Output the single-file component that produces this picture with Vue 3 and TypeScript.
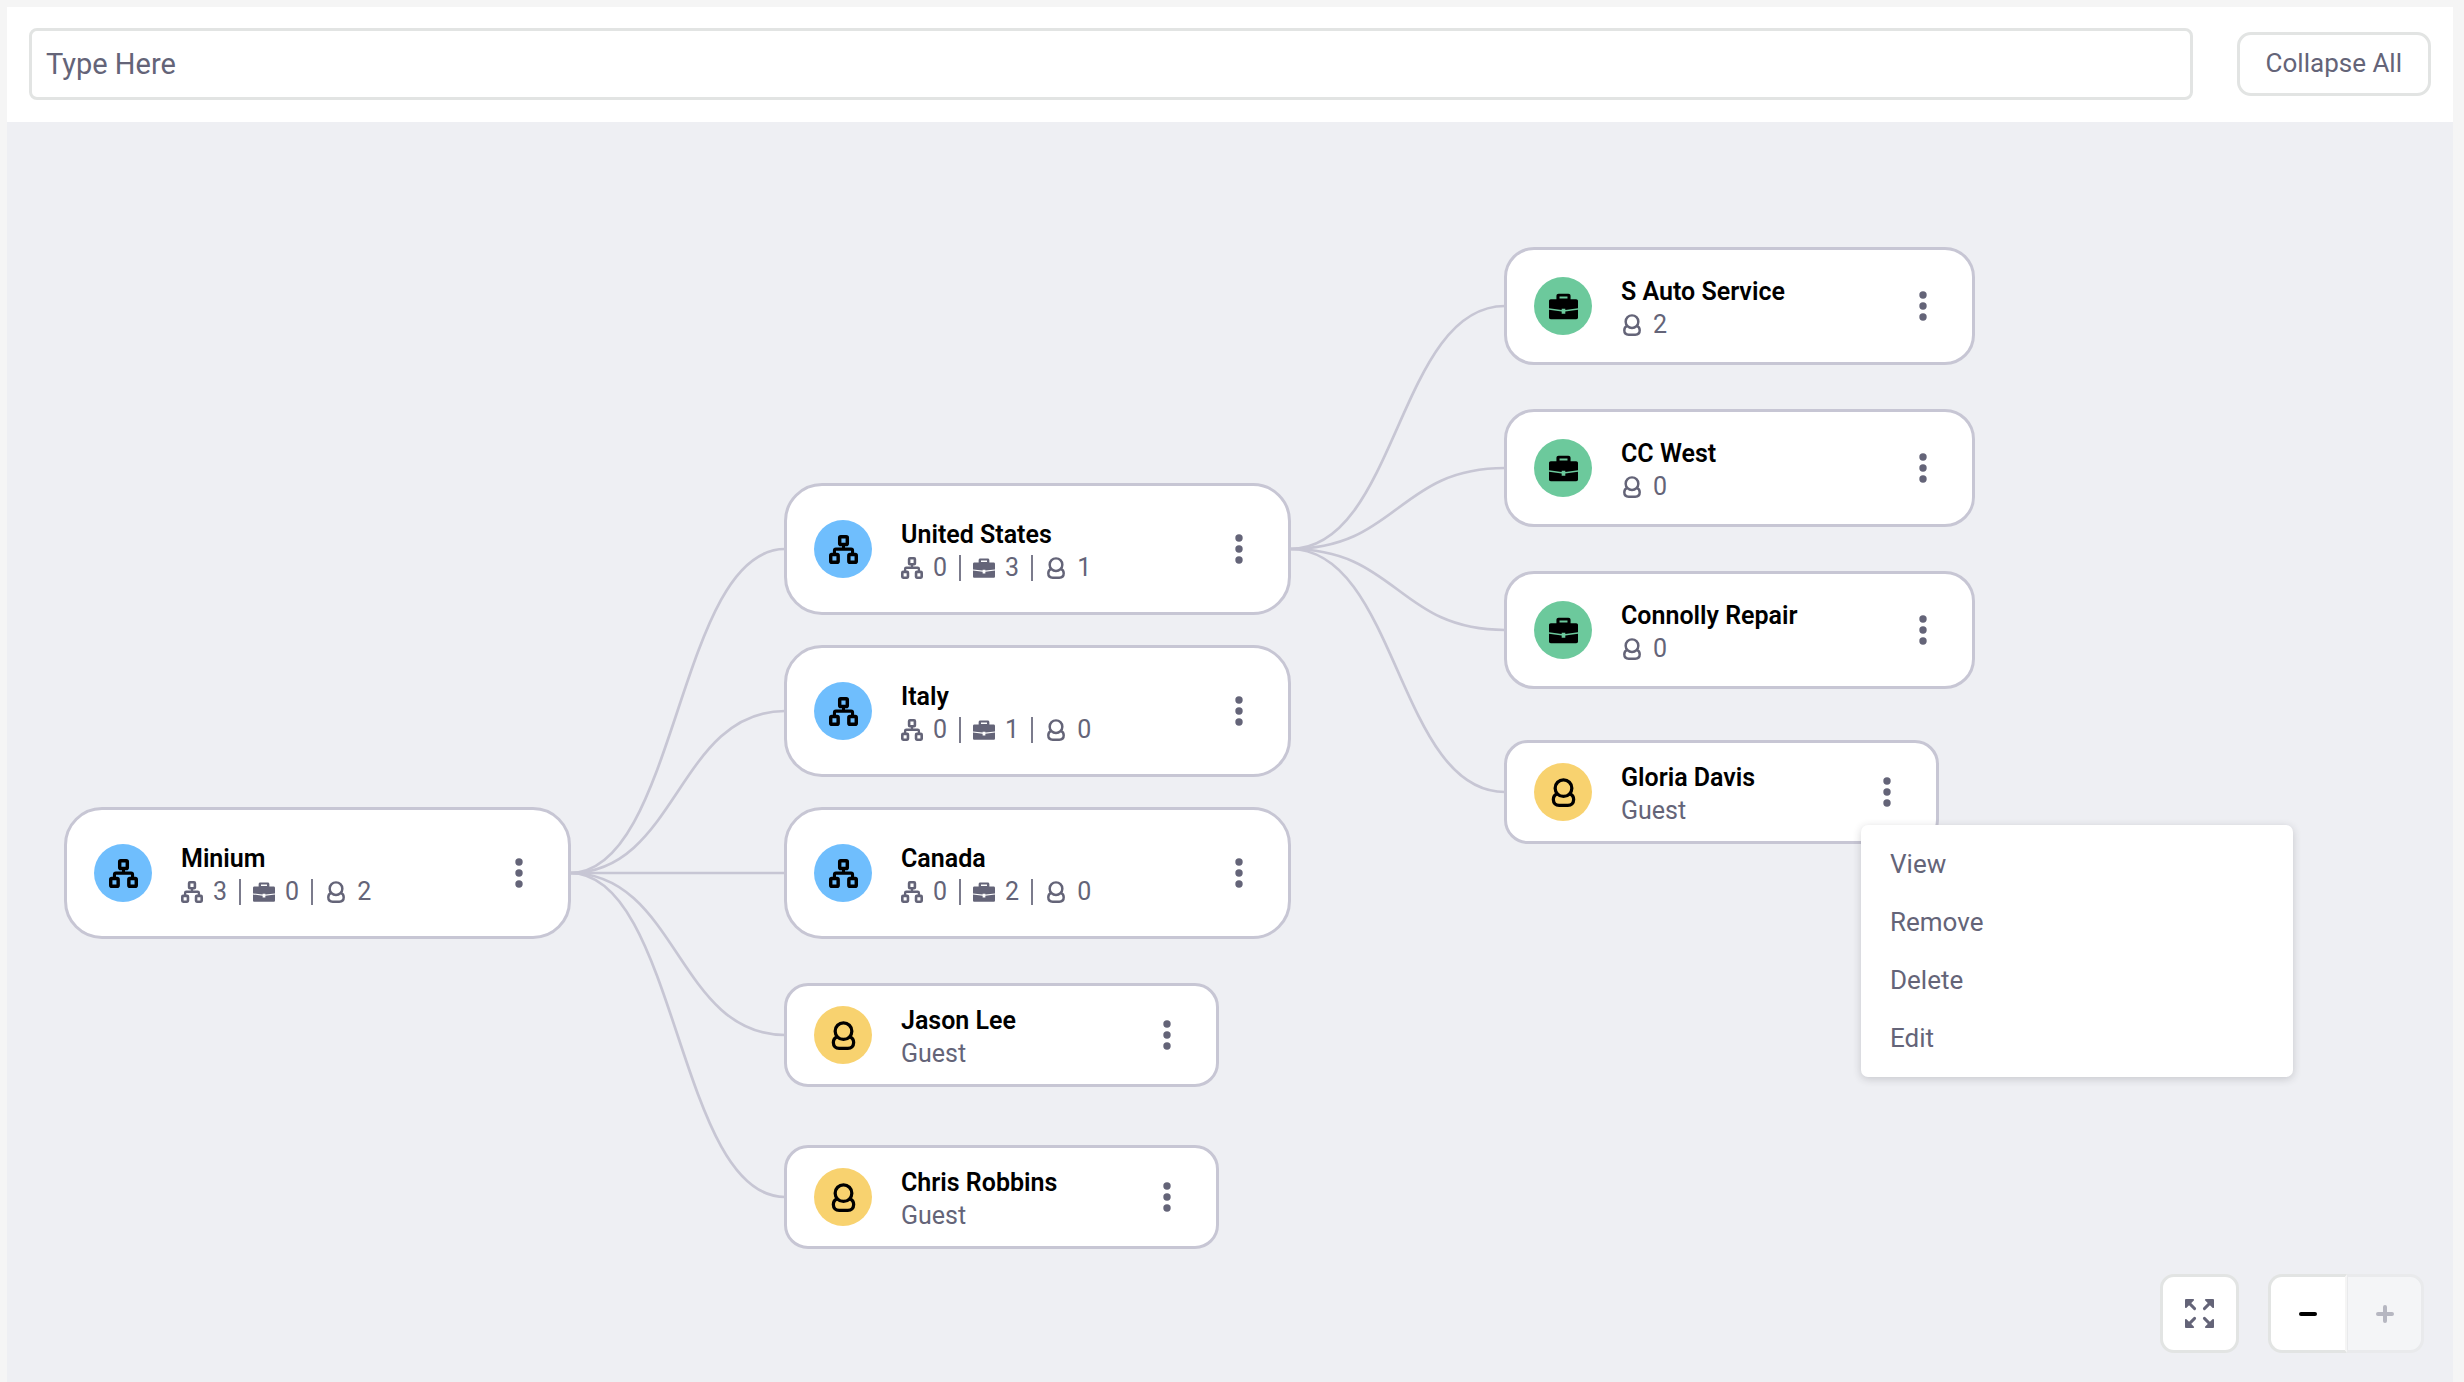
<script setup lang="ts">
import { computed, ref } from 'vue'

type Kind = 'organization' | 'account' | 'user'

interface ChartNode {
  id: string
  kind: Kind
  name: string
  x: number
  centerY: number
  parent?: string
  organizations?: number
  accounts?: number
  users?: number
}

const CARD_WIDTH: Record<Kind, number> = { organization: 507, account: 471, user: 435 }

const nodes: ChartNode[] = [
  { id: 'minium', kind: 'organization', name: 'Minium', x: 57, centerY: 751, organizations: 3, accounts: 0, users: 2 },
  { id: 'us', kind: 'organization', name: 'United States', x: 777, centerY: 427, parent: 'minium', organizations: 0, accounts: 3, users: 1 },
  { id: 'italy', kind: 'organization', name: 'Italy', x: 777, centerY: 589, parent: 'minium', organizations: 0, accounts: 1, users: 0 },
  { id: 'canada', kind: 'organization', name: 'Canada', x: 777, centerY: 751, parent: 'minium', organizations: 0, accounts: 2, users: 0 },
  { id: 'jason', kind: 'user', name: 'Jason Lee', x: 777, centerY: 913, parent: 'minium' },
  { id: 'chris', kind: 'user', name: 'Chris Robbins', x: 777, centerY: 1075, parent: 'minium' },
  { id: 's-auto', kind: 'account', name: 'S Auto Service', x: 1497, centerY: 184, parent: 'us', users: 2 },
  { id: 'cc-west', kind: 'account', name: 'CC West', x: 1497, centerY: 346, parent: 'us', users: 0 },
  { id: 'connolly', kind: 'account', name: 'Connolly Repair', x: 1497, centerY: 508, parent: 'us', users: 0 },
  { id: 'gloria', kind: 'user', name: 'Gloria Davis', x: 1497, centerY: 670, parent: 'us' },
]

const menuItems = ['View', 'Remove', 'Delete', 'Edit']
const query = ref('')

const links = computed(() =>
  nodes.flatMap((node) => {
    const parent = nodes.find((n) => n.id === node.parent)
    if (!parent) return []
    const x1 = parent.x + CARD_WIDTH[parent.kind] - 1
    const x2 = node.x + 1
    const mid = (x1 + x2) / 2
    return [{ id: node.id, d: `M${x1},${parent.centerY}C${mid},${parent.centerY} ${mid},${node.centerY} ${x2},${node.centerY}` }]
  }),
)

function stats(node: ChartNode): { kind: Kind; count: number }[] {
  const all: { kind: Kind; count?: number }[] = [
    { kind: 'organization', count: node.organizations },
    { kind: 'account', count: node.accounts },
    { kind: 'user', count: node.users },
  ]
  return all.filter((s): s is { kind: Kind; count: number } => s.count !== undefined)
}
</script>

<template>
  <div class="page">
    <svg class="sprite" aria-hidden="true">
      <symbol id="icon-organization" viewBox="0 0 16 16">
        <g fill="none" stroke="currentColor" stroke-width="1.9">
          <rect x="5.9" y="0.95" width="4.2" height="4.3" rx="0.6" />
          <rect x="0.95" y="10.8" width="4.1" height="4.25" rx="0.6" />
          <rect x="10.95" y="10.8" width="4.1" height="4.25" rx="0.6" />
          <path d="M8 5.5v2.4M3 10.5V8.6q0-.8.8-.8h8.4q.8 0 .8.8v1.9" stroke-width="1.7" />
        </g>
      </symbol>
      <symbol id="icon-account" viewBox="0 0 16 16">
        <path
          fill="currentColor"
          fill-rule="evenodd"
          d="M4.1 4V2.2C4.1 1.4 4.6 1 5.3 1h5.4c.7 0 1.2.4 1.2 1.2V4H15c.6 0 1 .4 1 1v4L9 9.9V9.3H7v.6L0 9V5c0-.6.4-1 1-1zM5.8 3.6h4.4V2.5H5.8z"
        />
        <path
          fill="currentColor"
          d="M0 9.8l7 1v1.2h2v-1.2l7-1v4.3c0 .6-.4.9-1 .9H1c-.6 0-1-.3-1-.9z"
        />
      </symbol>
      <symbol id="icon-user" viewBox="0 0 16 16">
        <g fill="none" stroke="currentColor" stroke-width="1.8">
          <circle cx="8" cy="5.6" r="4.6" />
          <path d="M4.5 8.7C3 9.3 2.4 10.4 2.4 11.9c0 2 1.3 3.2 3.2 3.2h4.8c1.9 0 3.2-1.2 3.2-3.2 0-1.5-.6-2.6-2.1-3.2" />
        </g>
      </symbol>
    </svg>

    <header class="toolbar">
      <input v-model="query" class="search" type="text" placeholder="Type Here" aria-label="Search" />
      <button class="collapse" type="button">Collapse All</button>
    </header>

    <main class="canvas">
      <svg class="links" aria-hidden="true">
        <path v-for="link in links" :key="link.id" :d="link.d" />
      </svg>

      <article
        v-for="node in nodes"
        :key="node.id"
        class="node"
        :class="node.kind"
        :style="{ left: node.x + 'px', top: node.centerY + 'px' }"
      >
        <span class="avatar">
          <svg aria-hidden="true"><use :href="'#icon-' + node.kind" /></svg>
        </span>
        <div class="info">
          <h2 class="name">{{ node.name }}</h2>
          <p v-if="node.kind === 'user'" class="role">Guest</p>
          <ul v-else class="stats">
            <li v-for="stat in stats(node)" :key="stat.kind" class="stat">
              <svg aria-hidden="true"><use :href="'#icon-' + stat.kind" /></svg>
              <span>{{ stat.count }}</span>
            </li>
          </ul>
        </div>
        <button class="more" type="button" :aria-label="'Actions for ' + node.name">
          <svg viewBox="0 0 8 30" aria-hidden="true">
            <circle cx="4" cy="4" r="3.7" />
            <circle cx="4" cy="15" r="3.7" />
            <circle cx="4" cy="26" r="3.7" />
          </svg>
        </button>
      </article>

      <div class="menu" role="menu">
        <button v-for="item in menuItems" :key="item" class="menu-item" type="button" role="menuitem">
          {{ item }}
        </button>
      </div>

      <div class="controls">
        <button class="control fit" type="button" aria-label="Fit to screen">
          <svg viewBox="0 0 16 16" aria-hidden="true">
            <g fill="currentColor" stroke="currentColor" stroke-linecap="round" stroke-linejoin="round">
              <g id="fit-arrow">
                <path d="M2 2l3.3 3.3" stroke-width="1.6" />
                <path d="M.5.5h4L.5 4.5z" stroke-width="1" />
              </g>
              <use href="#fit-arrow" transform="rotate(90 8 8)" />
              <use href="#fit-arrow" transform="rotate(180 8 8)" />
              <use href="#fit-arrow" transform="rotate(270 8 8)" />
            </g>
          </svg>
        </button>
        <div class="zoom">
          <button class="control minus" type="button" aria-label="Zoom out">
            <svg viewBox="0 0 18 18" aria-hidden="true"><path d="M2 9h14" /></svg>
          </button>
          <button class="control plus" type="button" aria-label="Zoom in" disabled>
            <svg viewBox="0 0 18 18" aria-hidden="true"><path d="M2 9h14M9 2v14" /></svg>
          </button>
        </div>
      </div>
    </main>
  </div>
</template>

<style>
body {
  margin: 0;
  background: #f5f5f5;
}
</style>

<style scoped>
.page {
  box-sizing: border-box;
  display: flex;
  flex-direction: column;
  min-height: 100vh;
  padding: 7px 11px 0 7px;
  font-family: Roboto, "Liberation Sans", sans-serif;
  font-size: 25px;
  color: #646478;
}

.sprite {
  position: absolute;
  width: 0;
  height: 0;
}

button,
input {
  box-sizing: border-box;
  margin: 0;
  font: inherit;
  color: inherit;
}

.toolbar {
  display: flex;
  align-items: center;
  gap: 44px;
  padding: 21px 22px 22px;
  background: #fff;
}

.search {
  flex: 1;
  min-width: 0;
  height: 72px;
  padding: 0 14px;
  border: 3px solid #e2e4e3;
  border-radius: 8px;
  background: #fff;
  font-size: 29px;
}

.search::placeholder {
  color: #646478;
  opacity: 1;
}

.collapse {
  height: 64px;
  padding: 0 26px 2px;
  border: 3px solid #e2e4e3;
  border-radius: 14px;
  background: #fff;
  font-size: 26px;
}

.canvas {
  position: relative;
  flex: 1;
  min-height: 1200px;
  overflow: hidden;
  background: #eeeff3;
}

.links {
  position: absolute;
  inset: 0;
  width: 100%;
  height: 100%;
}

.links path {
  fill: none;
  stroke: #c7c6d4;
  stroke-width: 2.7;
}

.node {
  position: absolute;
  box-sizing: border-box;
  display: flex;
  align-items: center;
  transform: translateY(-50%);
  padding: 0 27px;
  border: 3px solid #c7c6d4;
  background: #fff;
}

.organization {
  width: 507px;
  height: 132px;
  border-radius: 38px;
}

.account {
  width: 471px;
  height: 118px;
  border-radius: 30px;
}

.user {
  width: 435px;
  height: 104px;
  border-radius: 24px;
}

.avatar {
  display: flex;
  align-items: center;
  justify-content: center;
  width: 58px;
  height: 58px;
  border-radius: 50%;
  color: #000;
}

.organization .avatar {
  background: #6fbefd;
}

.account .avatar {
  background: #6cc99c;
}

.user .avatar {
  background: #f8d26f;
}

.avatar svg {
  width: 29px;
  height: 29px;
}

.info {
  flex: 1;
  margin-left: 29px;
  padding-top: 4px;
  line-height: 33px;
}

.name {
  margin: 0;
  font-size: 25px;
  font-weight: 600;
  color: #000;
}

.role {
  margin: 0;
}

.stats {
  display: flex;
  margin: 0;
  padding: 0;
  list-style: none;
}

.stat {
  display: flex;
  align-items: center;
  gap: 10px;
}

.stat svg {
  width: 22px;
  height: 22px;
}

.stat + .stat::before {
  content: "";
  width: 2px;
  height: 26px;
  margin: 0 2px 0 12px;
  background: #7b7b8c;
}

.more {
  display: flex;
  align-items: center;
  justify-content: center;
  width: 44px;
  height: 44px;
  padding: 0;
  border: 0;
  background: none;
}

.more svg {
  width: 8px;
  height: 30px;
  fill: #646478;
}

.menu {
  position: absolute;
  left: 1854px;
  top: 703px;
  box-sizing: border-box;
  display: flex;
  flex-direction: column;
  width: 432px;
  padding: 10px 0;
  border-radius: 7px;
  background: #fff;
  box-shadow: 0 2px 9px rgba(39, 40, 51, 0.2);
}

.menu-item {
  height: 58px;
  padding: 0 29px;
  border: 0;
  background: none;
  font-size: 26px;
  text-align: left;
}

.controls {
  position: absolute;
  right: 29px;
  bottom: 29px;
  display: flex;
  gap: 29px;
}

.zoom {
  display: flex;
}

.control {
  display: flex;
  align-items: center;
  justify-content: center;
  width: 79px;
  height: 79px;
  padding: 0;
  border: 3px solid #e2e4e3;
  border-radius: 14px;
  background: #fff;
}

.fit svg {
  width: 29px;
  height: 29px;
}

.minus svg,
.plus svg {
  width: 18px;
  height: 18px;
  stroke: currentColor;
  stroke-width: 4;
  stroke-linecap: round;
}

.minus {
  border-right: 2px solid #f5f5f5;
  border-radius: 14px 0 0 14px;
  color: #000;
}

.plus {
  width: 77px;
  border-left-width: 1px;
  border-radius: 0 14px 14px 0;
  opacity: 0.4;
}
</style>
